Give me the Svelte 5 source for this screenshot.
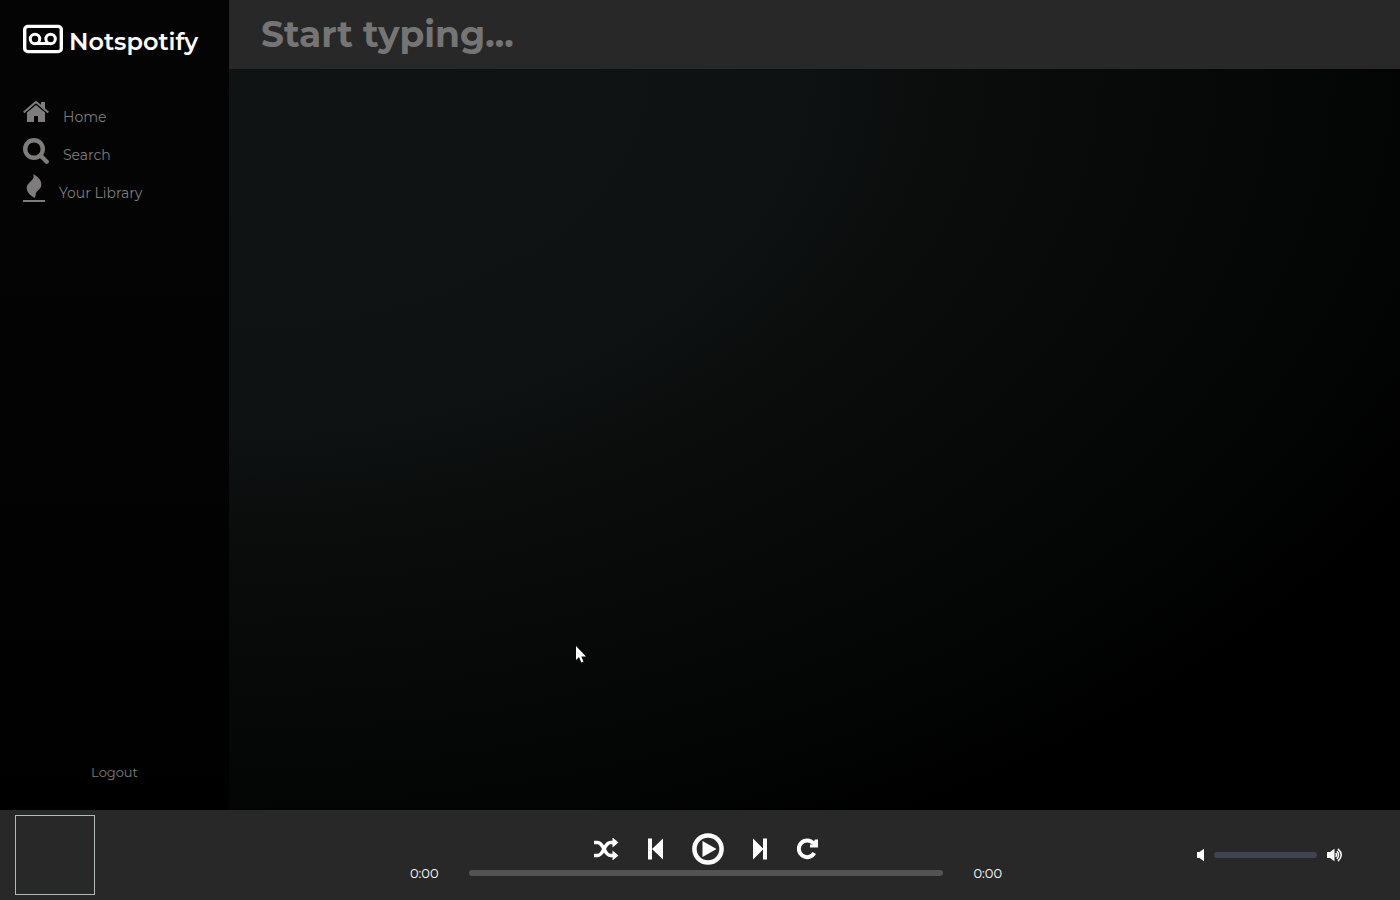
<script>
  let query = $state('');
  let position = $state(0);
  let volume = $state(0);
</script>

<div class="app">
  <div class="body">
    <aside class="sidebar">
      <a class="brand" href="#home">
        <svg width="40" height="30" viewBox="0 0 40 30" fill="none" stroke="#fff" aria-hidden="true">
          <rect x="1.700" y="2.400" width="36.600" height="25.200" rx="3.200" stroke-width="3.400" />
          <g stroke-width="3">
            <circle cx="12" cy="15" r="4.700" />
            <circle cx="27.600" cy="15" r="4.700" />
            <path d="M12 19.500H27.600" />
          </g>
        </svg>
        <span>Notspotify</span>
      </a>

      <nav>
        <a href="#home">
          <svg width="26" height="28" viewBox="0 0 26 28" aria-hidden="true">
            <path d="M18 2h4v9l-4-4z" fill="currentColor" />
            <path d="M.8 12.500 13 2l12.200 10.500" fill="none" stroke="currentColor" stroke-width="2.200" />
            <path d="M4 12.500 13 5l9 7.500V22h-7v-6h-4v6H4z" fill="currentColor" />
            <path d="M2 13.300 13 4l11 9.300" fill="none" stroke="#040404" stroke-width=".8" />
          </svg>
          <span>Home</span>
        </a>
        <a href="#search">
          <svg width="26" height="28" viewBox="0 0 26 28" fill="none" stroke="currentColor" stroke-width="4.400" aria-hidden="true">
            <circle cx="11" cy="11" r="8.800" />
            <path d="m17.500 17.500 6.200 6.200" stroke-linecap="round" />
          </svg>
          <span>Search</span>
        </a>
        <a href="#library">
          <svg width="22" height="28" viewBox="0 2 22 28" overflow="visible" fill="currentColor" aria-hidden="true">
            <path d="M10.300 0C13.500 2 18.400 5 18.400 10.500C18.400 15.500 12.500 17 12.700 20.500C12.700 21.800 12.400 22.500 11.600 24C8.500 22.300 3.700 19 3.700 13.800C3.700 8.500 12.500 6.500 10.300 0Z" />
            <path d="M0 26h22v2H0z" />
          </svg>
          <span>Your Library</span>
        </a>
      </nav>

      <button class="logout">Logout</button>
    </aside>

    <main>
      <input class="search" type="text" aria-label="Search" placeholder="Start typing..." bind:value={query} />
      <div class="results"></div>
    </main>
  </div>

  <footer>
    <div class="cover"></div>

    <div class="center">
      <div class="controls">
        <button aria-label="Shuffle">
          <svg width="26" height="22" viewBox="0 0 26 22" aria-hidden="true">
            <g fill="none" stroke="currentColor" stroke-width="3.600">
              <path d="M1 4.500H4.500C11 4.500 11 17.500 17.500 17.500H21" />
              <path d="M1 17.500H4.500C11 17.500 11 4.500 17.500 4.500H21" />
            </g>
            <path d="M19.500-.5 25.500 4.500 19.500 9.500zM19.500 12.500 25.500 17.500 19.500 22.500z" fill="currentColor" />
          </svg>
        </button>
        <button aria-label="Previous">
          <svg width="15" height="22" viewBox="0 0 15 22" fill="currentColor" aria-hidden="true">
            <path d="M0 .5h4v21H0zM4 11 15 .5v21z" />
          </svg>
        </button>
        <button aria-label="Play">
          <svg width="32" height="32" viewBox="0 0 32 32" aria-hidden="true">
            <circle cx="16" cy="16" r="13.600" fill="none" stroke="currentColor" stroke-width="4.500" />
            <path d="M10.500 8v16L24.500 16z" fill="currentColor" />
          </svg>
        </button>
        <button aria-label="Next">
          <svg width="15" height="22" viewBox="0 0 15 22" fill="currentColor" aria-hidden="true">
            <path d="M10 .5h4v21h-4zM0 .5 10.500 11 0 21.500z" />
          </svg>
        </button>
        <button aria-label="Repeat">
          <svg width="22" height="22" viewBox="0 0 22 22" aria-hidden="true">
            <path d="M17.300 15A8.300 8.300 0 1 1 16.500 5.500" fill="none" stroke="currentColor" stroke-width="4" />
            <path d="M21 1.500v8h-8V6.500h2.500l2.500-5z" fill="currentColor" />
          </svg>
        </button>
      </div>
      <div class="progress">
        <span>0:00</span>
        <input type="range" aria-label="Position" min="0" max="100" bind:value={position} />
        <span>0:00</span>
      </div>
    </div>

    <div class="volume">
      <svg width="7" height="14" viewBox="0 0 7 14" fill="#fff" aria-hidden="true">
        <path d="M0 4h2.500L7 .8v12.400L2.500 10H0z" />
      </svg>
      <input type="range" aria-label="Volume" min="0" max="100" bind:value={volume} />
      <svg width="16" height="14" viewBox="0 0 16 14" aria-hidden="true">
        <path d="M0 4h3L7.500.8v12.400L3 10H0z" fill="#fff" />
        <g fill="none" stroke="#fff" stroke-width="1.500">
          <path d="M8.800 5q1.400 2 0 4M10 3q3 4 0 8M11 .9q6.500 6.100 0 12.200" />
        </g>
      </svg>
    </div>
  </footer>

  <svg class="pointer" width="12" height="18" viewBox="0 0 12 18" fill="#fff" aria-hidden="true">
    <path d="M1 0v14l3-3 2.300 5.500 2.200-1L6.300 10.500H11z" />
  </svg>
</div>

<style>
  :global(body) {
    margin: 0;
    background: #000;
  }
  .app {
    position: relative;
    min-height: 100vh;
    display: flex;
    flex-direction: column;
    font-family: Montserrat, Inter, sans-serif;
    font-weight: 400;
    color: #fff;
  }
  .body {
    flex: 1;
    display: flex;
  }
  .sidebar {
    box-sizing: border-box;
    width: 229px;
    flex: none;
    display: flex;
    flex-direction: column;
    padding: 24px 23px 28px;
    background: linear-gradient(#040404, #030303 50%, #000);
  }
  a {
    color: inherit;
    text-decoration: none;
  }
  .brand {
    display: flex;
    gap: 6px;
    font-size: 24px;
    font-weight: 600;
    line-height: 36px;
  }
  nav {
    display: flex;
    flex-direction: column;
    gap: 10px;
    margin-top: 40px;
    color: #7f7d7b;
    font-size: 14px;
    line-height: 28px;
  }
  nav a {
    display: flex;
    gap: 14px;
    height: 28px;
  }
  nav span {
    padding-top: 3px;
  }
  svg {
    display: block;
    flex: none;
  }
  button {
    padding: 0;
    border: 0;
    background: none;
    color: inherit;
    font: inherit;
    cursor: pointer;
  }
  .logout {
    margin-top: auto;
    color: #7f7d7b;
    font-size: 13px;
    line-height: 20px;
  }
  main {
    flex: 1;
    min-width: 0;
    display: flex;
    flex-direction: column;
  }
  .results {
    flex: 1;
    background: radial-gradient(ellipse farthest-corner at top left, #0f1314 0, #0e1213 34%, #0b0d0c 43%, #050706 64%, #000 82%);
  }
  .search {
    box-sizing: border-box;
    width: 100%;
    height: 69px;
    padding: 0 32px 2px;
    border: 0;
    outline: 0;
    background: #282828;
    color: #fff;
    font: inherit;
    font-size: 36px;
    font-weight: 700;
  }
  .search::placeholder {
    color: #757575;
    opacity: 1;
  }
  footer {
    box-sizing: border-box;
    min-height: 90px;
    display: grid;
    grid-template-columns: 1fr minmax(0, 592px) 1fr;
    align-items: center;
    padding: 0 3px 0 15px;
    background: #282828;
  }
  .cover {
    box-sizing: border-box;
    width: 80px;
    height: 80px;
    border: 1px solid #b3b8b8;
  }
  .controls {
    display: flex;
    align-items: center;
    justify-content: center;
    gap: 29px;
    padding-top: 4px;
  }
  .progress {
    display: flex;
    align-items: center;
    gap: 30px;
    font-size: 13px;
    line-height: 16px;
  }
  input[type='range'] {
    appearance: none;
    flex: 1;
    min-width: 0;
    height: 6px;
    margin: 0;
    border-radius: 3px;
    background: #535353;
  }
  input[type='range']::-webkit-slider-thumb {
    appearance: none;
    width: 0;
    height: 0;
  }
  .volume {
    justify-self: end;
    display: flex;
    align-items: center;
    gap: 10px;
    width: 146px;
    padding-right: 54px;
  }
  .volume input[type='range'] {
    background: #404352;
  }
  .pointer {
    position: absolute;
    left: 575px;
    top: 646px;
  }
</style>
